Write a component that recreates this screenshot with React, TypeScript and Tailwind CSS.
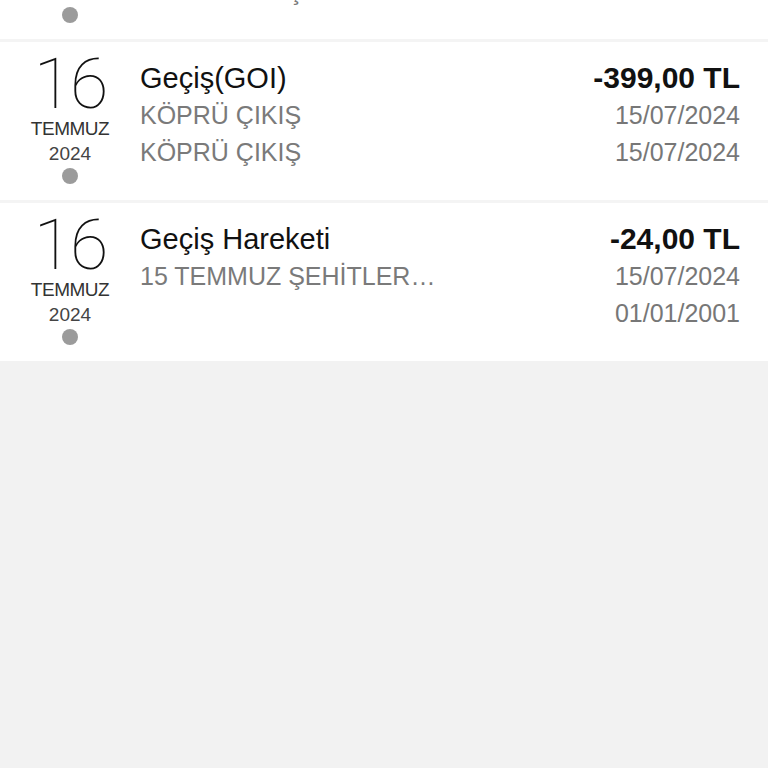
import React from 'react';

type Movement = {
  day: string;
  month: string;
  year: string;
  title: string;
  lines: string[];
  amount: string;
  dates: string[];
};

const movements: Movement[] = [
  {
    day: '16',
    month: 'TEMMUZ',
    year: '2024',
    title: 'Geçiş(GOI)',
    lines: ['KÖPRÜ GİRİŞ', 'KÖPRÜ GİRİŞ'],
    amount: '-399,00 TL',
    dates: ['15/07/2024', '15/07/2024'],
  },
  {
    day: '16',
    month: 'TEMMUZ',
    year: '2024',
    title: 'Geçiş(GOI)',
    lines: ['KÖPRÜ ÇIKIŞ', 'KÖPRÜ ÇIKIŞ'],
    amount: '-399,00 TL',
    dates: ['15/07/2024', '15/07/2024'],
  },
  {
    day: '16',
    month: 'TEMMUZ',
    year: '2024',
    title: 'Geçiş Hareketi',
    lines: ['15 TEMMUZ ŞEHİTLER…'],
    amount: '-24,00 TL',
    dates: ['15/07/2024', '01/01/2001'],
  },
];

function Row({ m, className = '' }: { m: Movement; className?: string }) {
  return (
    <div className={`flex h-[158px] bg-white ${className}`}>
      <div className="flex w-[140px] shrink-0 flex-col items-center pt-[7px]">
        <div className="text-[70px] leading-none font-thin tracking-[-2px] text-[#111] font-['Roboto','Inter',sans-serif]">
          {m.day}
        </div>
        <div className="-mt-[3px] text-[19px] leading-[25px] tracking-[-0.5px] text-[#333]">{m.month}</div>
        <div className="text-[19px] leading-[25px] text-[#444]">{m.year}</div>
        <div className="mt-[2px] h-4 w-4 rounded-full bg-[#9b9b9b]" />
      </div>
      <div className="min-w-0 flex-1 pt-[17px]">
        <div className="text-[29px] leading-[38px] text-[#111]">{m.title}</div>
        {m.lines.map((l, i) => (
          <div key={i} className="text-[25px] leading-[37px] whitespace-nowrap text-[#7a7a7a]">
            {l}
          </div>
        ))}
      </div>
      <div className="pt-[17px] pr-[28px] text-right">
        <div className="text-[30px] leading-[38px] font-bold text-[#111]">{m.amount}</div>
        {m.dates.map((d, i) => (
          <div key={i} className="text-[25px] leading-[37px] text-[#777]">
            {d}
          </div>
        ))}
      </div>
    </div>
  );
}

export default function App() {
  return (
    <div className="h-[768px] w-[768px] overflow-hidden bg-[#f2f2f2] font-['Liberation_Sans',Arial,sans-serif]">
      <div className="-mt-[119px] flex flex-col gap-[3px] bg-[#f4f4f4]">
        {movements.map((m, i) => (
          <Row key={i} m={m} />
        ))}
      </div>
    </div>
  );
}
